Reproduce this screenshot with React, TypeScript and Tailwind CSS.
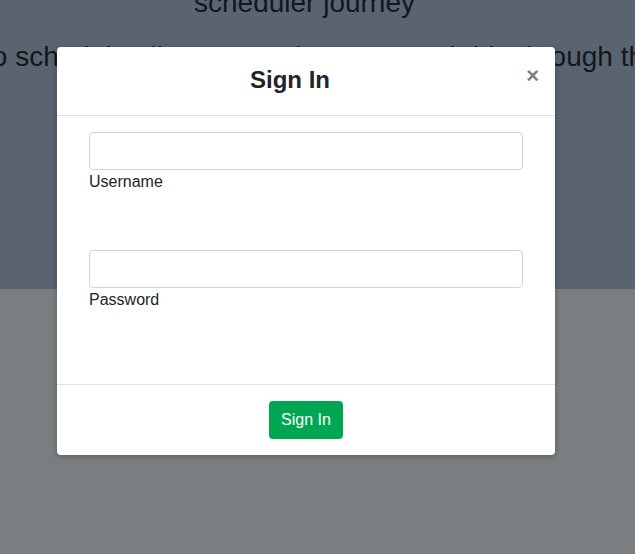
import React from "react";

export default function App() {
  return (
    <div className="relative w-[635px] h-[554px] overflow-hidden font-['Liberation_Sans',Arial,sans-serif] bg-[#7b7e80]">
      {/* page behind the backdrop */}
      <div className="h-[289px] bg-[#5a6370] flex flex-col items-center pr-[26px] text-[#14171a] text-[28px] leading-none">
        <p className="-mt-[11px] whitespace-nowrap">scheduler journey</p>
        <p className="mt-[26px] -ml-[9px] whitespace-nowrap">
          Use an app to schedule all your appointments and ride through the journey!
        </p>
      </div>

      {/* Modal */}
      <div className="absolute left-[57px] top-[47px] w-[498px] bg-white rounded-[4px] shadow-[0_2px_6px_rgba(0,0,0,0.25)] text-[#212529]">
        <div className="h-[69px] px-[16px] border-b border-[#dee2e6] flex items-center">
          <h2 className="flex-1 text-center text-[24px] font-bold leading-none -mt-[2px]">Sign In</h2>
          <button className="w-[32px] self-start mt-[18px] text-right text-[22px] font-bold leading-none text-[#808080]">
            ×
          </button>
        </div>
        <div className="px-[32px] pt-[16px] h-[268px]">
          <input
            type="text"
            className="block w-full h-[38px] border border-[#ced4da] rounded-[4px] px-3"
          />
          <label className="block text-[16px] leading-[24px]">Username</label>
          <input
            type="password"
            className="block w-full h-[38px] border border-[#ced4da] rounded-[4px] px-3 mt-[56px]"
          />
          <label className="block text-[16px] leading-[24px]">Password</label>
        </div>
        <div className="h-[71px] border-t border-[#dee2e6] flex items-center justify-center">
          <button className="h-[38px] px-[12px] bg-[#00a651] text-white text-[16px] rounded-[4px]">
            Sign In
          </button>
        </div>
      </div>
    </div>
  );
}
